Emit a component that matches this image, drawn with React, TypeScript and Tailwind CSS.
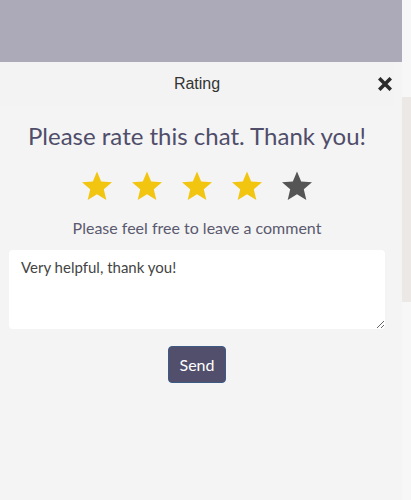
function Star({ filled }: { filled: boolean }) {
  return (
    <svg
      width="32"
      height="30"
      viewBox="0 0 32 30"
      className={filled ? "text-[#f2c511]" : "text-[#555555]"}
    >
      <polygon
        fill="currentColor"
        points="16,0.5 20.2,10.4 31,11.2 22.8,18.3 25.3,29 16,23.3 6.7,29 9.2,18.3 1,11.2 11.8,10.4"
      />
    </svg>
  );
}

function CloseIcon() {
  return (
    <svg width="14" height="14" viewBox="0 0 14 14" className="text-[#2b2b2b]">
      <path
        d="M2.5 2.5 L11.5 11.5 M11.5 2.5 L2.5 11.5"
        stroke="currentColor"
        strokeWidth="3.6"
        strokeLinecap="square"
      />
    </svg>
  );
}

export default function App() {
  const rating = 4;

  return (
    <div className="flex h-[500px] w-[411px] overflow-hidden bg-[#f4f4f4]">
      <div className="flex w-[402px] flex-col">
        <div className="h-[62px] bg-[#aca9b9]" />
        <div className="flex flex-1 flex-col pr-2">
          <div className="relative flex h-[44px] items-center justify-center bg-[#f3f3f3]">
            <span className="font-['Liberation_Sans',sans-serif] text-[16px] text-[#333333]">
              Rating
            </span>
            <div className="absolute right-[2px] top-[15px]">
              <CloseIcon />
            </div>
          </div>
          <div className="flex flex-col items-center font-['Lato',sans-serif]">
            <h2 className="mt-[14px] text-[24px] leading-[32px] text-[#4f4d6a]">
              Please rate this chat. Thank you!
            </h2>
            <div className="mt-[19px] flex gap-[18px]">
              {[1, 2, 3, 4, 5].map((n) => (
                <Star key={n} filled={n <= rating} />
              ))}
            </div>
            <p className="mt-[16px] text-[16px] leading-[22px] text-[#5a596e]">
              Please feel free to leave a comment
            </p>
            <div className="mt-[11px] w-full px-[9px]">
              <textarea
                defaultValue="Very helpful, thank you!"
                className="block h-[79px] w-full resize-y rounded-[4px] bg-white px-[12px] py-[6px] text-[15px] leading-[22px] text-[#444444] outline-none"
              />
            </div>
            <button className="mt-[17px] h-[37px] w-[58px] rounded-[4px] border border-[#3d5a85] bg-[#514f6b] text-[16px] text-white">
              Send
            </button>
          </div>
        </div>
      </div>
      <div className="flex w-[9px] flex-col bg-[#f7f7f7]">
        <div className="h-[97px]" />
        <div className="h-[205px] bg-[#ebe8e6]" />
      </div>
    </div>
  );
}
